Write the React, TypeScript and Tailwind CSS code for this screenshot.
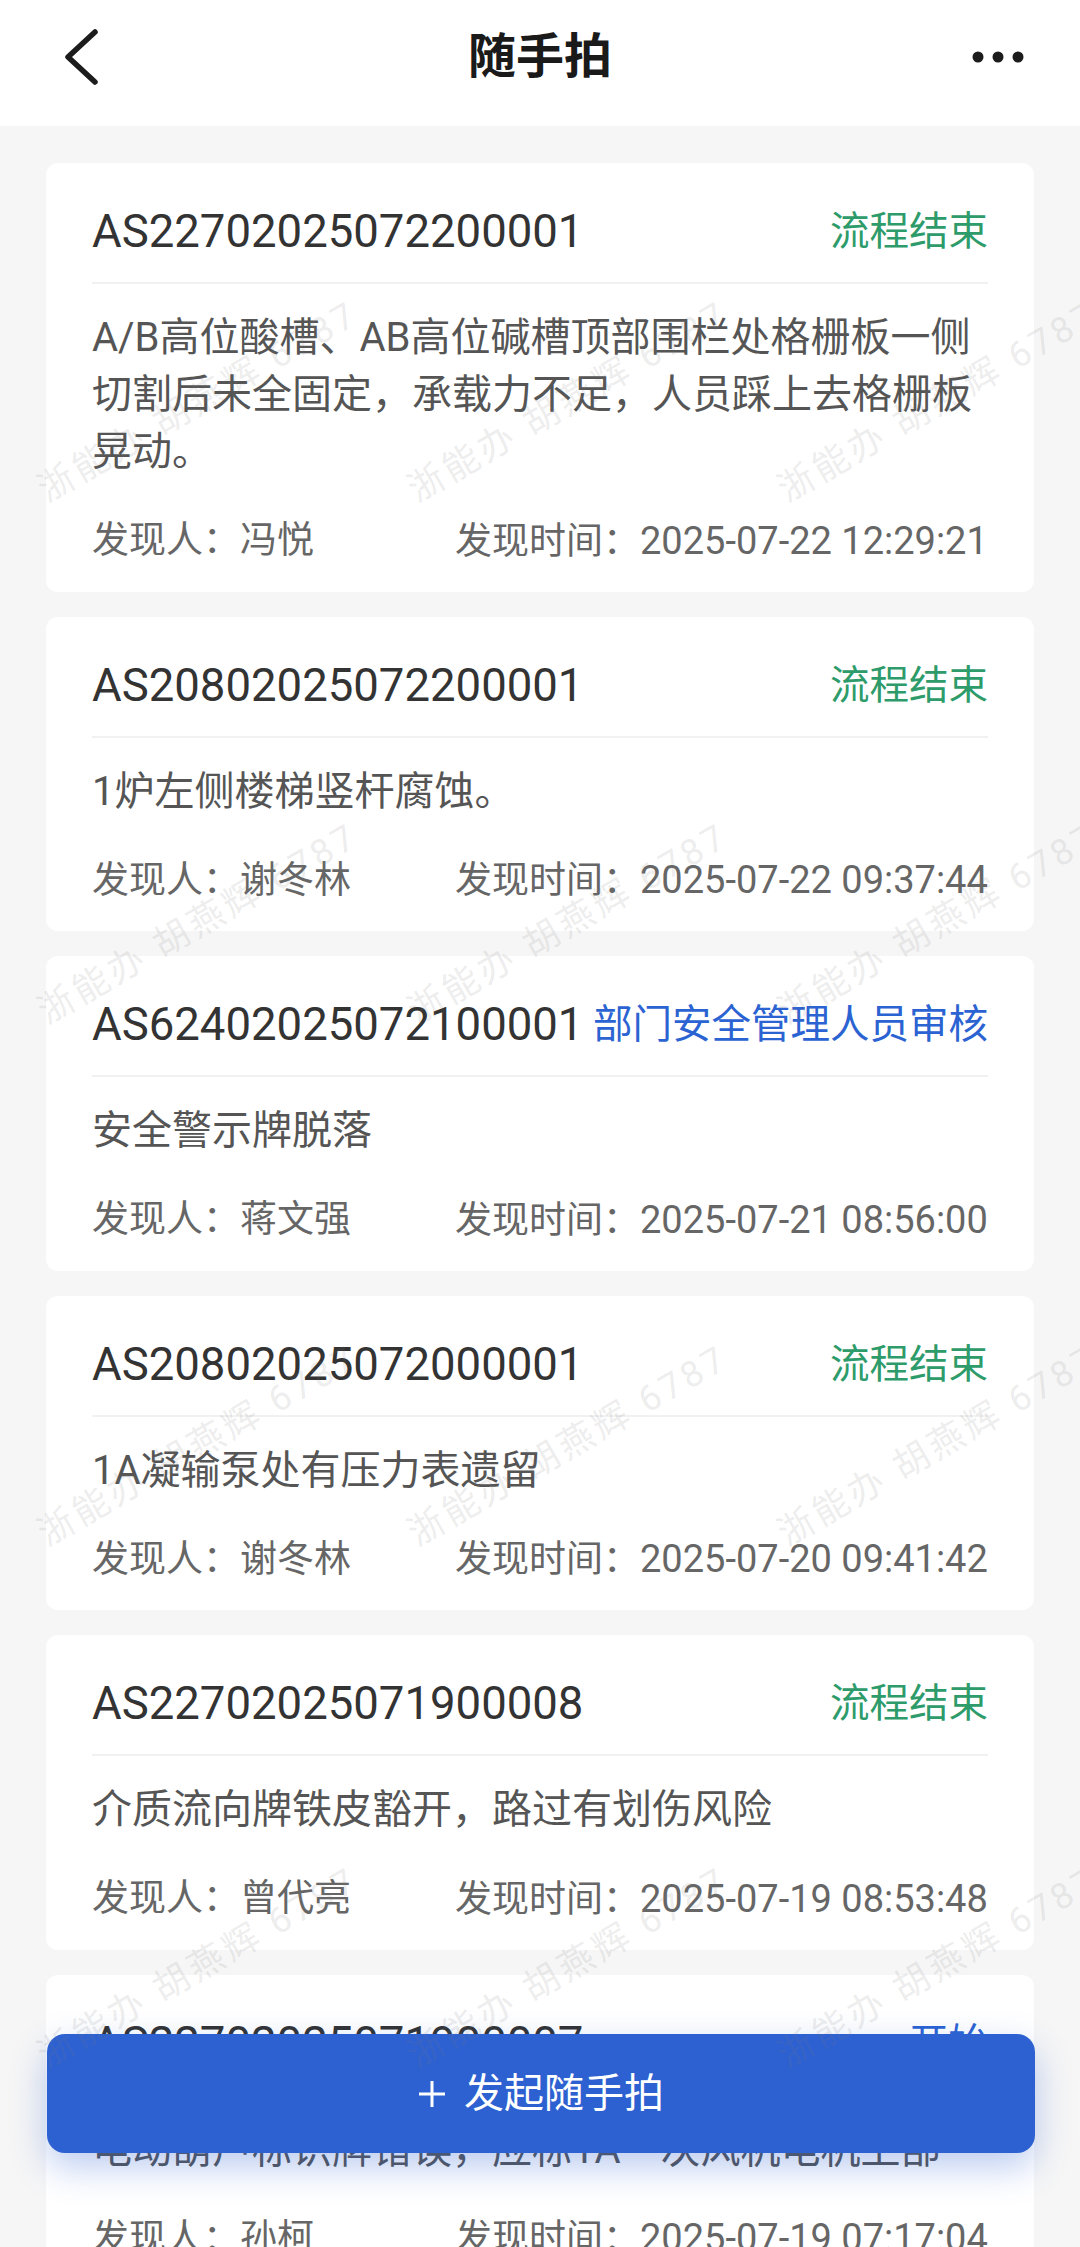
import React from 'react'

type Item = {
  code: string
  status: string
  tone: 'green' | 'blue'
  desc: string
  finder: string
  time: string
}

const items: Item[] = [
  {
    code: 'AS22702025072200001',
    status: '流程结束',
    tone: 'green',
    desc: 'A/B高位酸槽、AB高位碱槽顶部围栏处格栅板一侧切割后未全固定，承载力不足，人员踩上去格栅板晃动。',
    finder: '冯悦',
    time: '2025-07-22 12:29:21',
  },
  {
    code: 'AS20802025072200001',
    status: '流程结束',
    tone: 'green',
    desc: '1炉左侧楼梯竖杆腐蚀。',
    finder: '谢冬林',
    time: '2025-07-22 09:37:44',
  },
  {
    code: 'AS62402025072100001',
    status: '部门安全管理人员审核',
    tone: 'blue',
    desc: '安全警示牌脱落',
    finder: '蒋文强',
    time: '2025-07-21 08:56:00',
  },
  {
    code: 'AS20802025072000001',
    status: '流程结束',
    tone: 'green',
    desc: '1A凝输泵处有压力表遗留',
    finder: '谢冬林',
    time: '2025-07-20 09:41:42',
  },
  {
    code: 'AS22702025071900008',
    status: '流程结束',
    tone: 'green',
    desc: '介质流向牌铁皮豁开，路过有划伤风险',
    finder: '曾代亮',
    time: '2025-07-19 08:53:48',
  },
  {
    code: 'AS22702025071900007',
    status: '开始',
    tone: 'blue',
    desc: '电动葫芦标识牌错误，应标1A一次风机电机上部',
    finder: '孙柯',
    time: '2025-07-19 07:17:04',
  },
]

function Card({ item }: { item: Item }) {
  return (
    <div className="bg-white rounded-xl px-[46px] pt-[39px] pb-[25.5px]">
      <div className="flex items-center justify-between h-[60px] whitespace-nowrap">
        <span className="text-[45.5px] leading-[60px] text-[#333333]">{item.code}</span>
        <span
          className={
            item.tone === 'green'
              ? 'text-[39.5px] leading-[60px] text-[#2e9b6a]'
              : 'text-[39.5px] leading-[60px] text-[#2c63d2]'
          }
        >
          {item.status}
        </span>
      </div>
      <div className="mt-[20px] h-[2px] bg-[#f1f1f1]" />
      <p className="mt-[25px] text-[40px] leading-[57px] text-[#555555]">{item.desc}</p>
      <div className="mt-[36px] h-[50px] flex items-center text-[37px] text-[#666666] whitespace-nowrap">
        <span className="w-[363px]">发现人：{item.finder}</span>
        <span>
          发现时间：<span className="text-[38px]">{item.time}</span>
        </span>
      </div>
    </div>
  )
}

function Watermark() {
  const marks: { x: number; y: number }[] = []
  for (const y of [508, 1030, 1552, 2074]) {
    for (const x of [50, 420, 790]) marks.push({ x, y })
  }
  return (
    <div className="absolute inset-0 pointer-events-none overflow-hidden z-20">
      {marks.map((m, i) => (
        <span
          key={i}
          className="absolute whitespace-nowrap text-[36px] leading-[36px] tracking-[4px] text-[rgba(120,120,120,0.14)] origin-bottom-left -rotate-30"
          style={{ left: m.x, top: m.y - 36 }}
        >
          浙能办 胡燕辉 6787
        </span>
      ))}
    </div>
  )
}

export default function App() {
  return (
    <div className="relative w-[1080px] h-[2247px] overflow-hidden bg-[#f6f6f6] font-['Roboto','Noto_Sans_CJK_SC',sans-serif]">
      <header className="h-[126px] pb-[12px] bg-white grid grid-cols-[1fr_auto_1fr] items-center">
        <div className="flex items-center pl-[60px]">
          <svg width="44" height="60" viewBox="0 0 44 60" fill="none">
            <path d="M35 5 L8 30 L35 55" stroke="#1c1c1c" strokeWidth="5.5" strokeLinecap="round" strokeLinejoin="round" />
          </svg>
        </div>
        <h1 className="text-[48px] font-bold text-[#1a1a1a] leading-none">随手拍</h1>
        <div className="flex items-center justify-end pr-[54px]">
          <svg width="60" height="14" viewBox="0 0 60 14">
            <circle cx="12" cy="7" r="5.5" fill="#1c1c1c" />
            <circle cx="32" cy="7" r="5.5" fill="#1c1c1c" />
            <circle cx="52" cy="7" r="5.5" fill="#1c1c1c" />
          </svg>
        </div>
      </header>

      <main className="px-[46px] pt-[37px] flex flex-col gap-[25px]">
        {items.map((item) => (
          <Card key={item.code} item={item} />
        ))}
      </main>

      <button className="absolute left-[47px] right-[45px] bottom-[94px] h-[119px] rounded-[18px] bg-[#2d61d1] shadow-[0_14px_36px_rgba(45,97,209,0.32)] flex items-center justify-center gap-[18px] text-white z-10">
        <svg width="28" height="28" viewBox="0 0 28 28">
          <path d="M14 1 V27 M1 14 H27" stroke="#ffffff" strokeWidth="3" />
        </svg>
        <span className="text-[40px] leading-none">发起随手拍</span>
      </button>

      <Watermark />
    </div>
  )
}
